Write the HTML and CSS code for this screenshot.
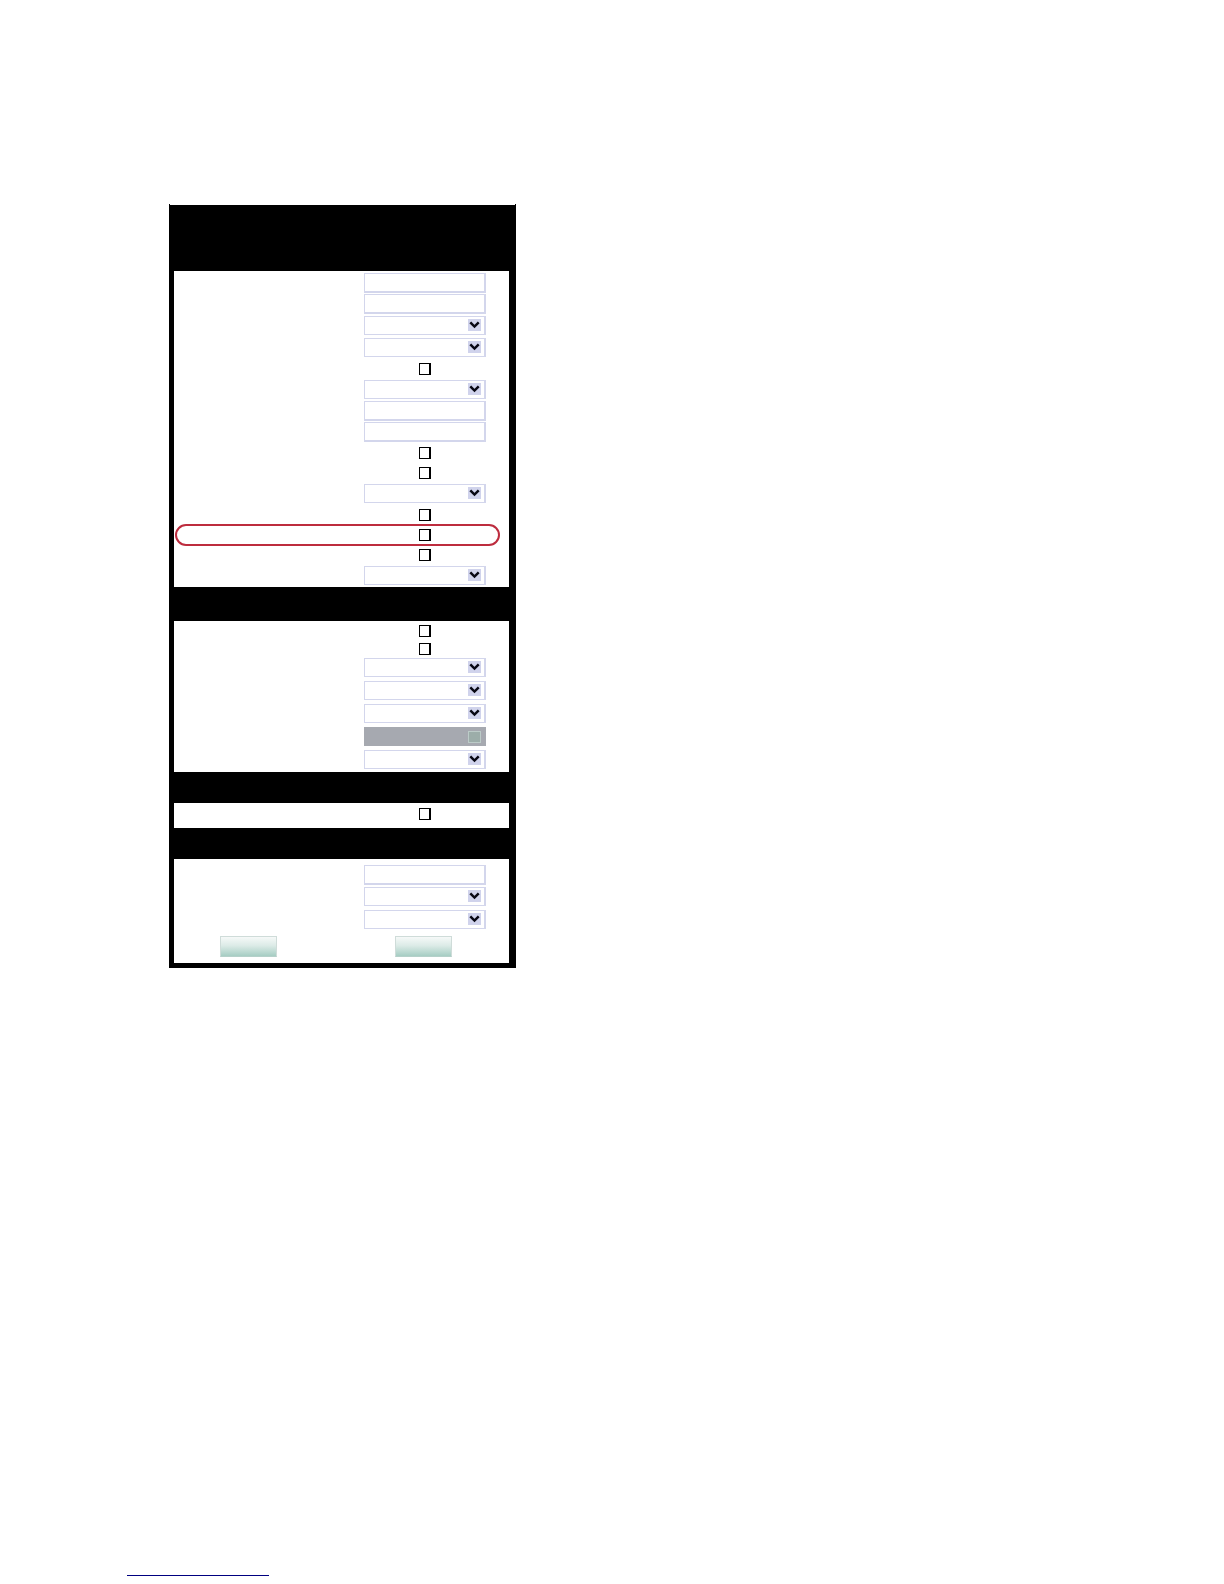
FILE: index.html
```html
<!DOCTYPE html>
<html lang="en">

<head>
    <meta charset="UTF-8">
    <meta name="viewport" content="width=device-width, initial-scale=1.0">
    <title>Settings Form</title>
    <link rel="stylesheet" href="styles.css">
</head>

<body>
    <main>
        <form class="panel">
            <div class="bar bar-title"></div>
            <div class="section section-main">
                <div class="row"><input type="text" class="field" aria-label="Text field 1"></div>
                <div class="row"><input type="text" class="field" aria-label="Text field 2"></div>
                <div class="row row-select"><select class="field" aria-label="List 1"><option></option></select></div>
                <div class="row row-select"><select class="field" aria-label="List 2"><option></option></select></div>
                <div class="row row-check"><input type="checkbox" class="check" aria-label="Option 1"></div>
                <div class="row row-select"><select class="field" aria-label="List 3"><option></option></select></div>
                <div class="row"><input type="text" class="field" aria-label="Text field 3"></div>
                <div class="row"><input type="text" class="field" aria-label="Text field 4"></div>
                <div class="row row-check"><input type="checkbox" class="check" aria-label="Option 2"></div>
                <div class="row row-check"><input type="checkbox" class="check" aria-label="Option 3"></div>
                <div class="row row-select"><select class="field" aria-label="List 4"><option></option></select></div>
                <div class="row row-check"><input type="checkbox" class="check" aria-label="Option 4"></div>
                <div class="row row-check highlight"><input type="checkbox" class="check" aria-label="Option 5"></div>
                <div class="row row-check"><input type="checkbox" class="check" aria-label="Option 6"></div>
                <div class="row row-select"><select class="field" aria-label="List 5"><option></option></select></div>
            </div>

            <div class="bar bar-tall"></div>
            <div class="section section-lists">
                <div class="row row-check"><input type="checkbox" class="check" aria-label="Option 7"></div>
                <div class="row row-check"><input type="checkbox" class="check" aria-label="Option 8"></div>
                <div class="row row-select"><select class="field" aria-label="List 6"><option></option></select></div>
                <div class="row row-select"><select class="field" aria-label="List 7"><option></option></select></div>
                <div class="row row-select"><select class="field" aria-label="List 8"><option></option></select></div>
                <div class="row row-select"><select class="field" aria-label="List 9" disabled><option></option></select></div>
                <div class="row row-select"><select class="field" aria-label="List 10"><option></option></select></div>
            </div>

            <div class="bar"></div>
            <div class="section section-single">
                <div class="row row-check"><input type="checkbox" class="check" aria-label="Option 9"></div>
            </div>

            <div class="bar"></div>
            <div class="section section-last">
                <div class="row"><input type="text" class="field" aria-label="Text field 5"></div>
                <div class="row row-select"><select class="field" aria-label="List 11"><option></option></select></div>
                <div class="row row-select"><select class="field" aria-label="List 12"><option></option></select></div>
                <div class="actions">
                    <button type="submit" class="button" aria-label="Submit"></button>
                    <button type="reset" class="button" aria-label="Reset"></button>
                </div>
            </div>
            <div class="bar bar-bottom"></div>
        </form>
    </main>

    <footer>
        <a href="#" class="footer-link" aria-label="Back to top"></a>
    </footer>
</body>

</html>
```

FILE: styles.css
```css
* {
    box-sizing: border-box;
}

body {
    display: flex;
    flex-direction: column;
    min-height: 100vh;
    margin: 0;
    background-color: #fff;
    font-family: "Liberation Sans", Arial, sans-serif;
    font-size: 12px;
}

main {
    padding: 204px 169px 0;
}

.panel {
    max-width: 347px;
    padding-top: 1px;
    border: solid #000;
    border-width: 0 1px;
}

.bar {
    height: 31px;
    background-color: #000;
}

.bar-title {
    height: 66px;
}

.bar-tall {
    height: 34px;
}

.bar-bottom {
    height: 5px;
}

.section {
    border: solid #000;
    border-width: 0 6px 0 4px;
}

.section-main {
    padding-top: 2px;
}

.section-single {
    padding: 1px 0 4px;
}

.section-last {
    padding: 6px 0;
}

/* controls sit in a column on the right */
.row {
    display: flex;
    justify-content: flex-end;
    align-items: flex-start;
    height: 21px;
    padding-right: 23px;
}

.row-select {
    height: 22px;
    padding-top: 1px;
}

.row-check {
    height: 20px;
    padding-top: 4px;
}

.section-lists .row-check {
    height: 18px;
}

.section-lists .row-select,
.section-last .row-select {
    height: 23px;
}

.field {
    appearance: none;
    width: 122px;
    height: 20px;
    margin: 0;
    padding: 0 4px;
    border: solid #d3d6ec;
    border-width: 1px 2px 2px 1px;
    border-radius: 0;
    background-color: #fff;
    font: inherit;
}

select.field {
    height: 19px;
    padding-right: 20px;
    border-bottom-width: 1px;
    background-image: url("data:image/svg+xml,%3Csvg xmlns='http://www.w3.org/2000/svg' width='13' height='12'%3E%3Crect width='13' height='12' fill='%23d0d3ec'/%3E%3Cpath d='M2.3 3.4L6.5 7.6L10.7 3.4' fill='none' stroke='%23080814' stroke-width='2.5'/%3E%3C/svg%3E");
    background-repeat: no-repeat;
    background-position: right 3px top 2px;
}

select.field:disabled {
    border-color: #a6a9b0;
    background-color: #a6a9b0;
    background-image: url("data:image/svg+xml,%3Csvg xmlns='http://www.w3.org/2000/svg' width='13' height='12'%3E%3Crect x='.5' y='.5' width='12' height='11' fill='%239cada9' stroke='%23bccbc8'/%3E%3C/svg%3E");
    background-position: right 3px top 3px;
    opacity: 1;
}

.check {
    appearance: none;
    width: 12px;
    height: 12px;
    margin: 0 55px;
    border: solid #000;
    border-width: 1px 2px 1px 1px;
    background-color: #fff;
}

.check:checked {
    background-color: #000;
}

.highlight {
    position: relative;
}

.highlight::before {
    content: "";
    position: absolute;
    inset: -1px 9px -1px 1px;
    border: 2px solid #bd2c3e;
    border-radius: 11px;
    pointer-events: none;
}

.actions {
    display: flex;
    gap: 118px;
    padding: 4px 0 0 46px;
}

.button {
    width: 57px;
    height: 21px;
    padding: 0;
    border: 1px solid #cfdcd9;
    border-bottom-color: #b4d0c9;
    background: linear-gradient(#f6f9f8, #dcebe7 45%, #a6cdc3);
    cursor: pointer;
}

footer {
    margin-top: auto;
    padding: 0 127px 8px;
}

.footer-link {
    display: block;
    max-width: 142px;
    height: 14px;
    border-bottom: 1px solid #000080;
}
```
